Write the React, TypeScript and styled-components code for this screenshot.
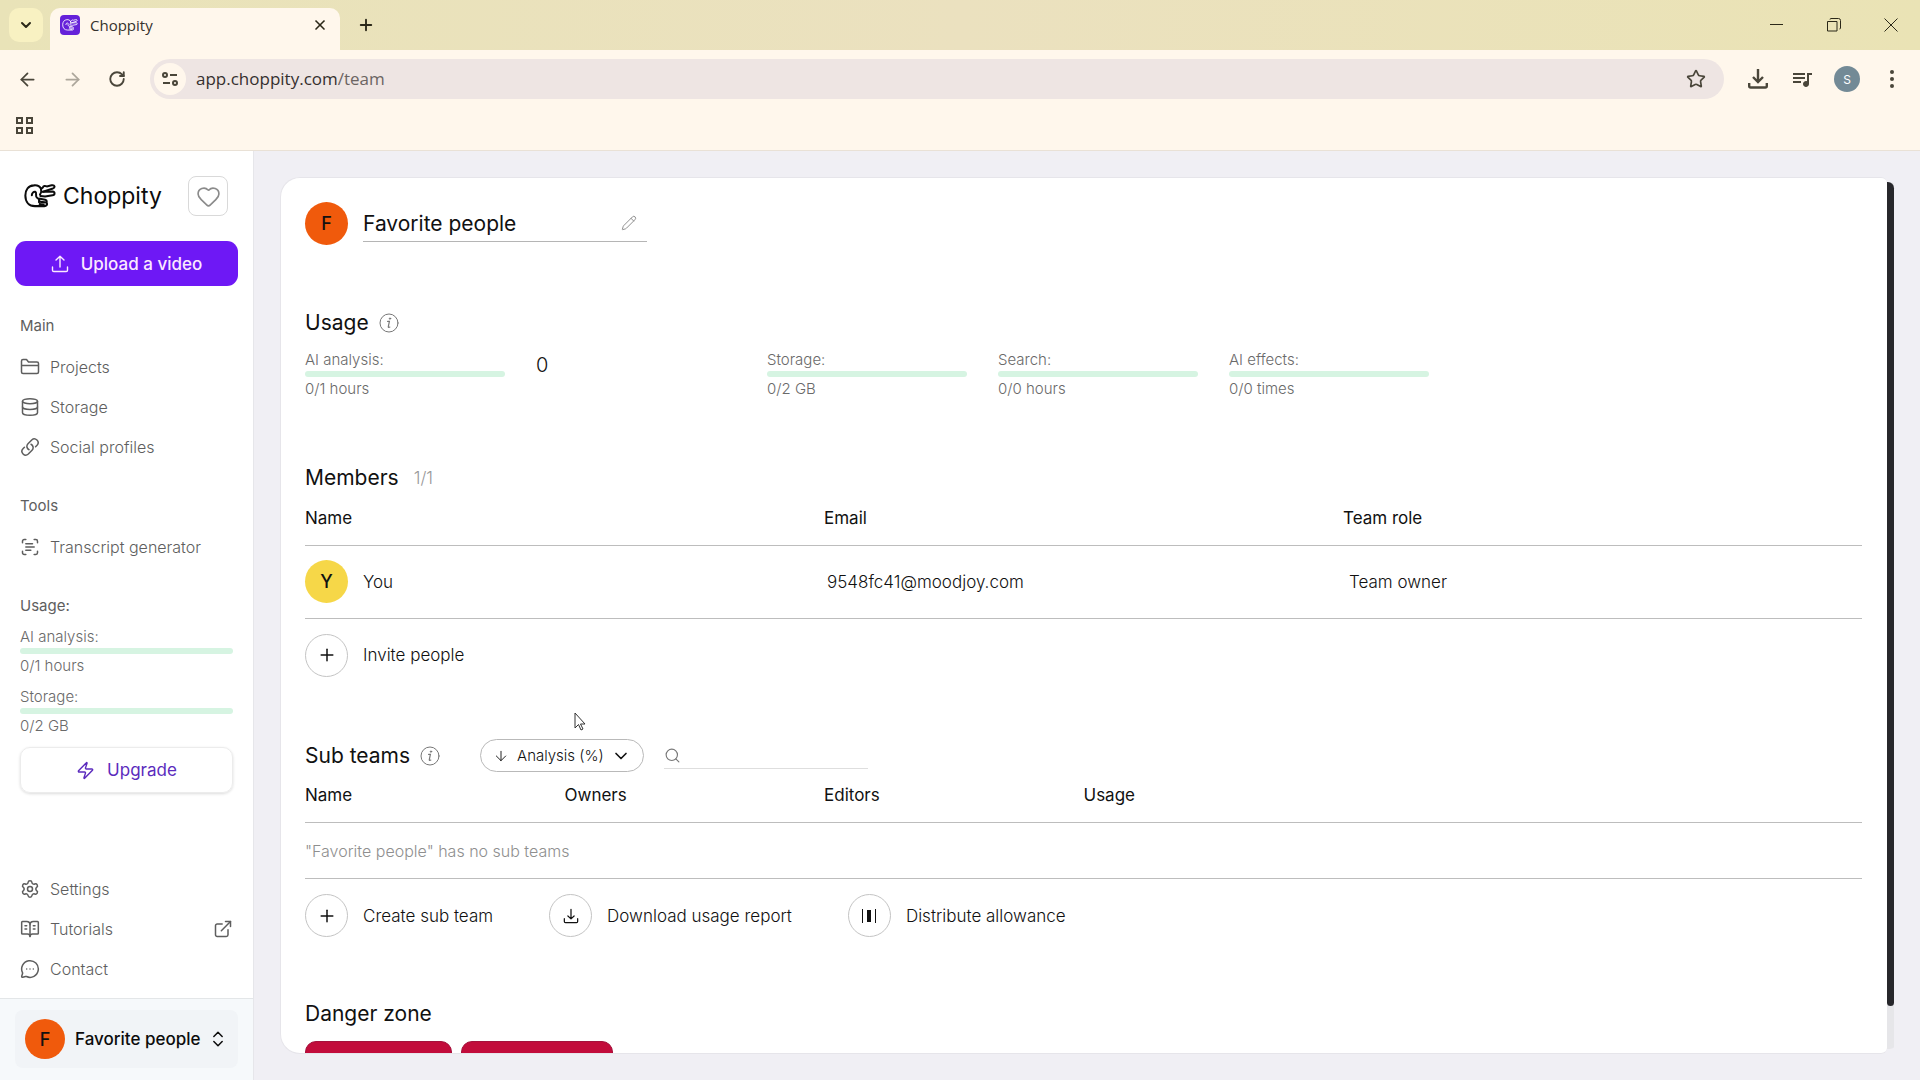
import React from "react";
import styled, { createGlobalStyle } from "styled-components";
import {
  ArrowDown, ArrowLeft, ArrowRight, BookOpenText, ChevronDown, ChevronsUpDown, Database, ExternalLink,
  Folder, Heart, MessageCircleMore, Pencil, Plus, RotateCw, ScanText, Search, Settings, Star, X, Zap,
} from "lucide-react";
import { MdOutlineQueueMusic } from "react-icons/md";

const GlobalStyle = createGlobalStyle`
  *, *::before, *::after { box-sizing: border-box; }
  body { margin: 0; font-family: Inter, "Liberation Sans", sans-serif; font-weight: 300; color: #111; }
  button, input, select { font: inherit; color: inherit; margin: 0; }
  a { color: inherit; text-decoration: none; }
  svg { display: block; flex: none; }
`;

const Window = styled.div`
  display: flex;
  flex-direction: column;
  height: 100vh;
  overflow: hidden;
  background: #f0eff4;
`;

/* Browser frame */

const PlainButton = styled.button`
  display: inline-flex;
  align-items: center;
  justify-content: center;
  padding: 0;
  border: 0;
  background: none;
  cursor: pointer;
`;

const TabStrip = styled.div`
  display: flex;
  align-items: center;
  height: 50px;
  padding: 0 17px 0 9px;
  background: linear-gradient(90deg, #e9e3b8, #ebe1bf 50%, #eae3b5);
  color: #2b2818;
`;

const TabSearch = styled(PlainButton)`
  width: 34px;
  height: 34px;
  border-radius: 10px;
  background: #f8f1c2;
`;

const Tab = styled.div`
  display: flex;
  align-items: center;
  align-self: flex-end;
  width: 290px;
  height: 42px;
  margin-left: 7px;
  padding: 0 12px 8px 10px;
  border-radius: 10px 10px 0 0;
  background: #fff7ec;
`;

const TabIcon = styled.span`
  display: grid;
  place-items: center;
  width: 20px;
  height: 20px;
  border-radius: 4px;
  background: #6521d9;
  color: #fff;
`;

const TabTitle = styled.span`
  flex: 1;
  margin-left: 10px;
  font: 400 15px/20px "Open Sans", sans-serif;
  color: #35322c;
`;

const NewTab = styled(PlainButton)`
  width: 32px;
  height: 32px;
  margin-left: 10px;
`;

const WindowControls = styled.div`
  display: flex;
  gap: 32px;
  margin-left: auto;
`;

const WindowControl = styled(PlainButton)`
  width: 25px;
  height: 24px;
`;

const Toolbar = styled.div`
  display: flex;
  align-items: center;
  height: 58px;
  padding: 0 16px 0 15px;
  background: #fff7ec;
  color: #4a463a;
`;

const NavButtons = styled.div`
  display: flex;
  gap: 21px;
`;

const ToolButton = styled(PlainButton)<{ $faded?: boolean }>`
  width: 24px;
  height: 24px;
  opacity: ${(p) => (p.$faded ? 0.45 : 1)};
`;

const AddressBar = styled.div`
  display: flex;
  flex: 1;
  align-items: center;
  height: 40px;
  margin: 0 22px 0 21px;
  padding: 0 18px 0 4px;
  border-radius: 20px;
  background: #eee5e3;
`;

const SiteInfo = styled(PlainButton)`
  width: 32px;
  height: 32px;
  border-radius: 50%;
  background: #fff7ec;
`;

const Address = styled.div`
  flex: 1;
  margin-left: 10px;
  font: 400 17px/24px "Open Sans", sans-serif;
  color: #35302f;

  span { color: #6b6462; }
`;

const ToolbarActions = styled.div`
  display: flex;
  align-items: center;
  gap: 20px;
`;

const ProfileBadge = styled(PlainButton)`
  width: 26px;
  height: 26px;
  border-radius: 50%;
  background: #738a96;
  color: #fff;
  font-size: 12px;
  font-weight: 400;
`;

const BookmarksBar = styled.div`
  display: flex;
  align-items: center;
  height: 43px;
  padding: 0 14px 7px;
  border-bottom: 1px solid #e9e1d6;
  background: #fff7ec;
  color: #4a463a;
`;

/* Sidebar */

const Body = styled.div`
  display: flex;
  flex: 1;
  min-height: 0;
`;

const Sidebar = styled.aside`
  display: flex;
  flex-direction: column;
  width: 254px;
  border-right: 1px solid #e6e6ea;
  background: #fff;
  color: #5e5e5e;
`;

const Brand = styled.div`
  display: flex;
  align-items: center;
  height: 40px;
  margin: 25px 25px 25px 24px;
  color: #0c0c0c;
`;

const BrandName = styled.span`
  flex: 1;
  margin-left: 7px;
  font-size: 23px;
  font-weight: 400;
`;

const HeartButton = styled(PlainButton)`
  width: 40px;
  height: 40px;
  border: 1px solid #d9d9d9;
  border-radius: 8px;
  color: #8b8b8b;
`;

const UploadButton = styled(PlainButton)`
  gap: 12px;
  height: 45px;
  margin: 0 15px;
  border-radius: 11px;
  background: #6e18f5;
  color: #fbe9ff;
  font-size: 17px;
  font-weight: 500;
`;

const SectionLabel = styled.h2`
  margin: 0 20px;
  font-size: 15px;
  font-weight: 400;
  line-height: 20px;
`;

const Nav = styled.nav<{ $space: number }>`
  margin-top: ${(p) => p.$space}px;
`;

const NavLinks = styled.div`
  margin-top: 11px;
`;

const NavLink = styled.a`
  display: flex;
  align-items: center;
  gap: 10px;
  height: 40px;
  padding: 0 20px;
  font-size: 16px;

  span { flex: 1; }
`;

const BottomNav = styled.nav`
  margin-top: auto;
`;

const SideUsage = styled.section`
  display: flex;
  flex-direction: column;
  gap: 11px;
  margin: 29px 20px 0;

  h2 { margin: 0; }
`;

const MeterBox = styled.div`
  display: flex;
  flex-direction: column;
  color: #6a6a6a;
  font-size: 15px;
  line-height: 20px;
`;

const MeterTrack = styled.div`
  height: 6px;
  margin: 1px 0 2px;
  border-radius: 3px;
  background: #d6f4e2;
`;

const MeterFill = styled.div`
  height: 100%;
  border-radius: 3px;
  background: #3ecf80;
`;

const UpgradeButton = styled(PlainButton)`
  gap: 12px;
  height: 46px;
  border: 1px solid #ececec;
  border-radius: 10px;
  box-shadow: 0 1px 3px rgba(0, 0, 0, 0.14);
  color: #5b2bbd;
  font-size: 17px;
  font-weight: 400;
`;

const SideFooter = styled.div`
  margin-top: 9px;
  padding: 11px 15px 12px;
  border-top: 1px solid #e3e6e8;
  background: #f6f9fb;
`;

const TeamSwitcher = styled(PlainButton)`
  justify-content: flex-start;
  width: 100%;
  height: 58px;
  padding: 0 10px;
  border-radius: 8px;
  background: #f1f4f7;
  color: #0c0c0c;
  font-size: 17px;
  font-weight: 500;
`;

const SwitcherName = styled.span`
  flex: 1;
  margin-left: 10px;
  text-align: left;
  white-space: nowrap;
`;

const Avatar = styled.span<{ $color: string; $size: number }>`
  display: grid;
  flex: none;
  place-items: center;
  width: ${(p) => p.$size}px;
  height: ${(p) => p.$size}px;
  border-radius: 50%;
  background: ${(p) => p.$color};
  color: #111;
  font-size: 18px;
  font-weight: 500;
`;

/* Team page */

const Main = styled.main`
  display: flex;
  flex: 1;
  min-width: 0;
  padding: 26px;
`;

const Card = styled.div`
  flex: 1;
  min-width: 0;
  overflow: hidden;
  padding: 24px 25px 0 24px;
  border: 1px solid #e6e5ea;
  border-right: 0;
  border-radius: 20px 6px 6px 20px;
  background: #fff;
`;

const ScrollTrack = styled.div`
  width: 7px;
  padding: 5px 0;
  border-radius: 0 10px 10px 0;
  background: #e6e6e9;
  background-clip: content-box;
`;

const ScrollThumb = styled.div`
  height: 95%;
  border-radius: 0 7px 4px 4px;
  background: #27272b;
`;

const TeamHeader = styled.header`
  display: flex;
  align-items: center;
  gap: 15px;
`;

const NameField = styled.label`
  display: flex;
  align-items: center;
  width: 284px;
  height: 36px;
  padding-right: 10px;
  border-bottom: 1px solid #b5b5b5;
  color: #888;
`;

const NameInput = styled.input`
  flex: 1;
  min-width: 0;
  padding: 0;
  border: 0;
  outline: 0;
  background: none;
  color: #111;
  font-size: 21px;
  font-weight: 400;
`;

const Section = styled.section<{ $space: number }>`
  margin-top: ${(p) => p.$space}px;
`;

const SectionHead = styled.div`
  display: flex;
  align-items: center;
  height: 32px;
`;

const Title = styled.h1`
  margin: 0;
  font-size: 21px;
  font-weight: 400;
  line-height: 32px;
`;

const InfoButton = styled(PlainButton)`
  margin-left: 10px;
  color: #777;
`;

const Count = styled.span`
  margin-left: 15px;
  color: #999;
  font-size: 17px;
`;

const Meters = styled.div`
  display: grid;
  grid-template-columns: repeat(5, 200px);
  gap: 31px;
  margin-top: 11px;
`;

const Total = styled.span`
  font-size: 20px;
  line-height: 30px;
`;

const Table = styled.table`
  width: 100%;
  border-collapse: collapse;
  table-layout: fixed;
  font-size: 17px;
  text-align: left;

  th { height: 51px; padding: 0 0 3px; border-bottom: 1px solid #bdbdbd; font-weight: 400; }
  td { padding: 0; border-bottom: 1px solid #bdbdbd; }
  td + td { padding-left: 3px; }
  td + td + td { padding-left: 6px; }
`;

const MemberRow = styled.tr`
  height: 73px;
`;

const EmptyRow = styled.tr`
  height: 56px;
  color: #8f8f8f;
  font-size: 16px;
`;

const Person = styled.div`
  display: flex;
  align-items: center;
  gap: 15px;
`;

const Actions = styled.div`
  display: flex;
  gap: 56px;
  margin-top: 15px;
`;

const ActionButton = styled(PlainButton)`
  gap: 15px;
  font-size: 17px;
`;

const Ring = styled.span`
  display: grid;
  place-items: center;
  width: 43px;
  height: 43px;
  border: 1px solid #c4c4c4;
  border-radius: 50%;
`;

const SortPill = styled.label`
  display: flex;
  align-items: center;
  height: 33px;
  margin-left: 40px;
  padding: 0 12px;
  border: 1px solid #b9b9b9;
  border-radius: 17px;
`;

const SortSelect = styled.select`
  width: 94px;
  margin-left: 8px;
  padding: 0;
  border: 0;
  outline: 0;
  appearance: none;
  background: none;
  font-size: 15px;
`;

const SearchField = styled.label`
  display: flex;
  align-items: center;
  width: 204px;
  height: 26px;
  margin-left: 20px;
  border-bottom: 1px solid #dedede;
  color: #777;
`;

const SearchInput = styled.input`
  flex: 1;
  min-width: 0;
  border: 0;
  outline: 0;
  background: none;
  font-size: 15px;
`;

const DangerActions = styled.div`
  display: flex;
  gap: 9px;
  margin-top: 11px;
`;

const DangerButton = styled(PlainButton)<{ $width: number }>`
  width: ${(p) => p.$width}px;
  height: 45px;
  border: 1px solid #a3123c;
  border-radius: 11px;
  background: #c20c3b;
`;

const Pointer = styled.svg`
  position: absolute;
  top: 712px;
  left: 574px;
`;

function Logo({ width, stroke }: { width: number; stroke: number }) {
  return (
    <svg width={width} viewBox="0 0 94 70" fill="none" stroke="currentColor" strokeWidth={stroke} strokeLinecap="round" strokeLinejoin="round">
      <path d="M50 14C46 6 38 3 29 4C13 5 4 17 4 34C4 53 15 65 32 65H60C66 65 69 61 67 56" />
      <path d="M23 33C23 27 28 22 33 23C39 25 32 37 38 40C44 43 47 46 44 53" />
      <path d="M50 14L55 11C57 5 62 5 67 7L81 4C91 2 92 10 85 13L56 23" />
      <path d="M50 14C52 21 50 27 47 31" />
      <path d="M56 23L84 22C92 23 91 33 84 33L62 37L48 35" />
      <path d="M47 43L62 46C69 48 68 55 61 54L47 52M46 59L58 61" />
    </svg>
  );
}

function Info() {
  return (
    <svg width="20" height="20" viewBox="0 0 20 20" fill="none" stroke="currentColor" strokeLinecap="round">
      <circle cx="10" cy="10" r="9" />
      <path d="M8.6 8.4h1.8L9.3 13.6c-.2 1 .6 1.1 1.5.5" strokeWidth="1.2" />
      <circle cx="11" cy="5.600" r=".7" fill="currentColor" />
    </svg>
  );
}

function Tray({ size, up }: { size: number; up?: boolean }) {
  return (
    <svg width={size} height={size} viewBox="0 0 18 18" fill="none" stroke="currentColor" strokeWidth="1.4" strokeLinecap="round" strokeLinejoin="round">
      <path d="M1.5 12v3.2c0 .8.5 1.3 1.3 1.3h12.4c.8 0 1.3-.5 1.3-1.3V12" />
      <path d={up ? "M9 12V1.5M5 5l4-3.800L13 5" : "M9 1.5V12M5.5 9 9 12.2 12.5 9"} />
    </svg>
  );
}

function ChainLink() {
  return (
    <svg width="20" height="20" viewBox="0 0 24 24" fill="none" stroke="currentColor" strokeWidth="1.8" strokeLinecap="round" strokeLinejoin="round">
      <path d="M13.2 8.7a4.5 4.5 0 0 1 1.240 7.240l-4.5 4.5a4.5 4.5 0 0 1-6.360-6.360l1.750-1.760m13.350-.640 1.760-1.760a4.5 4.5 0 0 0-6.360-6.360l-4.5 4.5a4.5 4.5 0 0 0 1.240 7.240" />
    </svg>
  );
}

function Meter({ label, value, used }: { label: string; value: string; used: number }) {
  return (
    <MeterBox>
      <span>{label}</span>
      <MeterTrack><MeterFill style={{ width: `${used}%` }} /></MeterTrack>
      <span>{value}</span>
    </MeterBox>
  );
}

function BrowserFrame() {
  return (
    <>
      <TabStrip>
        <TabSearch aria-label="Search tabs"><ChevronDown size={16} strokeWidth={3} /></TabSearch>
        <Tab>
          <TabIcon><Logo width={16} stroke={5} /></TabIcon>
          <TabTitle>Choppity</TabTitle>
          <PlainButton aria-label="Close tab"><X size={16} strokeWidth={2.5} /></PlainButton>
        </Tab>
        <NewTab aria-label="New tab"><Plus size={18} strokeWidth={2.5} /></NewTab>
        <WindowControls>
          <WindowControl aria-label="Minimize">
            <svg width="14" height="14" stroke="currentColor"><path d="M0 6.5h13" /></svg>
          </WindowControl>
          <WindowControl aria-label="Restore">
            <svg width="14" height="14" fill="none" stroke="currentColor"><path d="M.5 3.5h9.5v9.5H.5zM3 1.5q0-1 1-1h7.5q2 0 2 2v7.5q0 1-1 1" /></svg>
          </WindowControl>
          <WindowControl aria-label="Close">
            <svg width="14" height="14" stroke="currentColor"><path d="M.5.5l13 13M13.5.5l-13 13" /></svg>
          </WindowControl>
        </WindowControls>
      </TabStrip>
      <Toolbar>
        <NavButtons>
          <ToolButton aria-label="Back"><ArrowLeft size={21} /></ToolButton>
          <ToolButton aria-label="Forward" $faded><ArrowRight size={21} /></ToolButton>
          <ToolButton aria-label="Reload"><RotateCw size={18} strokeWidth={2.5} /></ToolButton>
        </NavButtons>
        <AddressBar>
          <SiteInfo aria-label="Site information">
            <svg width="16" height="16" viewBox="0 0 16 16" fill="none" stroke="currentColor" strokeWidth="2">
              <circle cx="3" cy="4" r="2" /><path d="M8 4h7M1 12h7" /><circle cx="13" cy="12" r="2" />
            </svg>
          </SiteInfo>
          <Address>app.choppity.com<span>/team</span></Address>
          <PlainButton aria-label="Bookmark this page"><Star size={20} /></PlainButton>
        </AddressBar>
        <ToolbarActions>
          <ToolButton aria-label="Downloads">
            <svg width="20" height="20" viewBox="0 0 20 20" fill="none" stroke="currentColor" strokeWidth="2.4">
              <path d="M10 0v13M5 8l5 5 5-5M1.2 14v3q0 1.5 1.5 1.5h14.6q1.5 0 1.5-1.5v-3" />
            </svg>
          </ToolButton>
          <ToolButton aria-label="Media controls"><MdOutlineQueueMusic size={24} /></ToolButton>
          <ProfileBadge aria-label="Profile S">S</ProfileBadge>
          <ToolButton aria-label="Browser menu">
            <svg width="20" height="20" fill="currentColor"><circle cx="10" cy="3" r="2" /><circle cx="10" cy="10" r="2" /><circle cx="10" cy="17" r="2" /></svg>
          </ToolButton>
        </ToolbarActions>
      </Toolbar>
      <BookmarksBar>
        <PlainButton aria-label="Tab groups">
          <svg width="20" height="20" fill="none" stroke="currentColor" strokeWidth="2">
            <path d="M3 2h5v5H3zM13 2h5v5h-5zM3 12h5v5H3zM13 12h5v5h-5z" />
          </svg>
        </PlainButton>
      </BookmarksBar>
    </>
  );
}

const icon = { size: 20, strokeWidth: 1.8 };

function SideMenu() {
  return (
    <Sidebar>
      <Brand>
        <Logo width={32} stroke={6} />
        <BrandName>Choppity</BrandName>
        <HeartButton aria-label="Favorites"><Heart size={25} strokeWidth={1.6} /></HeartButton>
      </Brand>
      <UploadButton><Tray size={18} up />Upload a video</UploadButton>
      <Nav $space={30}>
        <SectionLabel>Main</SectionLabel>
        <NavLinks>
          <NavLink href="#projects">
            <svg width="20" height="20" viewBox="0 0 20 20" fill="none" stroke="currentColor" strokeWidth="1.5" strokeLinejoin="round">
              <path d="M1.500 4q0-1.500 1.500-1.500h3.500l2 2.500h8.500q1.500 0 1.500 1.500v8.500q0 1.500-1.500 1.500H3q-1.500 0-1.500-1.500zM1.500 8.500h17" />
            </svg>
            <span>Projects</span>
          </NavLink>
          <NavLink href="#storage"><Database {...icon} /><span>Storage</span></NavLink>
          <NavLink href="#social"><ChainLink /><span>Social profiles</span></NavLink>
        </NavLinks>
      </Nav>
      <Nav $space={29}>
        <SectionLabel>Tools</SectionLabel>
        <NavLinks>
          <NavLink href="#transcript"><ScanText {...icon} /><span>Transcript generator</span></NavLink>
        </NavLinks>
      </Nav>
      <SideUsage>
        <SectionLabel>Usage:</SectionLabel>
        <Meter label="AI analysis:" value="0/1 hours" used={0} />
        <Meter label="Storage:" value="0/2 GB" used={0} />
        <UpgradeButton><Zap size={19} strokeWidth={1.8} />Upgrade</UpgradeButton>
      </SideUsage>
      <BottomNav>
        <NavLink href="#settings"><Settings {...icon} /><span>Settings</span></NavLink>
        <NavLink href="#tutorials"><BookOpenText {...icon} /><span>Tutorials</span><ExternalLink {...icon} /></NavLink>
        <NavLink href="#contact"><MessageCircleMore {...icon} /><span>Contact</span></NavLink>
      </BottomNav>
      <SideFooter>
        <TeamSwitcher>
          <Avatar $color="#f05a0c" $size={40}>F</Avatar>
          <SwitcherName>Favorite people</SwitcherName>
          <ChevronsUpDown size={20} strokeWidth={1.8} />
        </TeamSwitcher>
      </SideFooter>
    </Sidebar>
  );
}

export default function App() {
  return (
    <Window>
      <GlobalStyle />
      <BrowserFrame />
      <Body>
        <SideMenu />
        <Main>
          <Card>
            <TeamHeader>
              <Avatar $color="#f05a0c" $size={43}>F</Avatar>
              <NameField>
                <NameInput aria-label="Team name" defaultValue="Favorite people" />
                <Pencil size={16} strokeWidth={1.4} />
              </NameField>
            </TeamHeader>

            <Section $space={62}>
              <SectionHead>
                <Title>Usage</Title>
                <InfoButton aria-label="About usage"><Info /></InfoButton>
              </SectionHead>
              <Meters>
                <Meter label="AI analysis:" value="0/1 hours" used={0} />
                <Total>0</Total>
                <Meter label="Storage:" value="0/2 GB" used={0} />
                <Meter label="Search:" value="0/0 hours" used={0} />
                <Meter label="AI effects:" value="0/0 times" used={0} />
              </Meters>
            </Section>

            <Section $space={63}>
              <SectionHead>
                <Title>Members</Title>
                <Count>1/1</Count>
              </SectionHead>
              <Table>
                <thead>
                  <tr><th>Name</th><th>Email</th><th>Team role</th></tr>
                </thead>
                <tbody>
                  <MemberRow>
                    <td><Person><Avatar $color="#f6d748" $size={43}>Y</Avatar>You</Person></td>
                    <td>9548fc41@moodjoy.com</td>
                    <td>Team owner</td>
                  </MemberRow>
                </tbody>
              </Table>
              <Actions>
                <ActionButton><Ring><Plus size={20} strokeWidth={1.8} /></Ring>Invite people</ActionButton>
              </Actions>
            </Section>

            <Section $space={63}>
              <SectionHead>
                <Title>Sub teams</Title>
                <InfoButton aria-label="About sub teams"><Info /></InfoButton>
                <SortPill>
                  <ArrowDown size={16} strokeWidth={1.4} />
                  <SortSelect aria-label="Sort sub teams" defaultValue="analysis">
                    <option value="analysis">Analysis (%)</option>
                  </SortSelect>
                  <ChevronDown size={20} />
                </SortPill>
                <SearchField>
                  <Search size={17} strokeWidth={1.6} />
                  <SearchInput type="search" aria-label="Search sub teams" />
                </SearchField>
              </SectionHead>
              <Table>
                <thead>
                  <tr><th>Name</th><th>Owners</th><th>Editors</th><th>Usage</th><th /><th /></tr>
                </thead>
                <tbody>
                  <EmptyRow><td colSpan={6}>"Favorite people" has no sub teams</td></EmptyRow>
                </tbody>
              </Table>
              <Actions>
                <ActionButton><Ring><Plus size={20} strokeWidth={1.8} /></Ring>Create sub team</ActionButton>
                <ActionButton><Ring><Tray size={16} /></Ring>Download usage report</ActionButton>
                <ActionButton>
                  <Ring>
                    <svg width="14" height="14" fill="currentColor"><path d="M0 0h1v14H0zM5 1h4v12H5zM13 0h1v14h-1z" /></svg>
                  </Ring>
                  Distribute allowance
                </ActionButton>
              </Actions>
            </Section>

            <Section $space={61}>
              <SectionHead><Title>Danger zone</Title></SectionHead>
              <DangerActions>
                <DangerButton $width={147} aria-label="Leave team" />
                <DangerButton $width={152} aria-label="Delete team" />
              </DangerActions>
            </Section>
          </Card>
          <ScrollTrack><ScrollThumb /></ScrollTrack>
        </Main>
      </Body>
      <Pointer width="14" height="20" viewBox="0 0 14 20" fill="#fff" stroke="#333">
        <path d="M1 1v15l3.5-3.5 2.500 5.500 2-1-2.500-5H11z" />
      </Pointer>
    </Window>
  );
}
